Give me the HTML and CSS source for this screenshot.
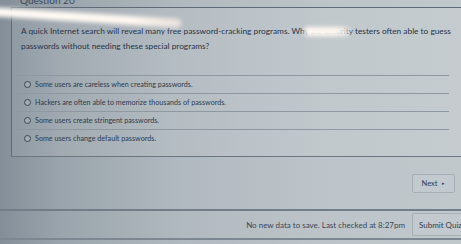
FILE: index.html
```html
<!DOCTYPE html>
<html>
<head>
<meta charset="utf-8">
<link rel="stylesheet" href="styles.css">
</head>
<body>
<div class="page">
  <div class="qhead"><span class="qtitle">Question 20</span></div>
  <div class="qbox">
    <p class="qtext">A quick Internet search will reveal many free password-cracking programs. Why are security testers often able to guess passwords without needing these special programs?</p>
    <ul class="answers">
      <li class="answer"><span class="radio"></span>Some users are careless when creating passwords.</li>
      <li class="answer"><span class="radio"></span>Hackers are often able to memorize thousands of passwords.</li>
      <li class="answer"><span class="radio"></span>Some users create stringent passwords.</li>
      <li class="answer"><span class="radio"></span>Some users change default passwords.</li>
    </ul>
  </div>
  <div class="nav">
    <button class="btn next">Next <span class="tri">&#9656;</span></button>
  </div>
  <div class="footer">
    <span class="status">No new data to save. Last checked at 8:27pm</span>
    <button class="btn submit">Submit Quiz</button>
  </div>
  <div class="glare g1"></div>
  <div class="glare g2"></div>
</div>
</body>
</html>
```
FILE: styles.css
```css
html, body {
  margin: 0;
  padding: 0;
}
body {
  width: 461px;
  height: 244px;
  overflow: hidden;
  font-family: Lato, "Open Sans", sans-serif;
  color: #2c3848;
}
.page {
  position: relative;
  width: 461px;
  height: 244px;
  overflow: hidden;
  background: linear-gradient(90deg, #838e98 0px, #9aa4ac 60px, #b0b9bf 180px, #bcc4c9 320px, #c1c8cc 461px);
  display: flex;
  flex-direction: column;
}
.qhead {
  height: 7px;
  overflow: hidden;
  padding-left: 20px;
}
.qtitle {
  display: block;
  margin-top: -5px;
  font-size: 10px;
  line-height: 11px;
  color: #3d4957;
}
.qbox {
  margin-left: 11px;
  height: 150px;
  border-left: 1px solid #5f6b76;
  border-top: 1px solid #5f6b76;
  border-bottom: 1px solid #6b7681;
  background: rgba(255,255,255,0.07);
  box-sizing: border-box;
}
.qtext {
  margin: 0;
  padding: 16px 0 0 9px;
  font-size: 8.3px;
  line-height: 15px;
  height: 51px;
  box-sizing: content-box;
  color: #27344a;
}
.answers {
  list-style: none;
  margin: 0;
  padding: 0;
  width: 437px;
}
.answer {
  border-top: 1px solid #8e98a1;
  height: 18px;
  box-sizing: border-box;
  display: flex;
  align-items: center;
  padding-left: 12px;
  font-size: 7.2px;
  color: #2f3b4c;
}
.radio {
  width: 5px;
  height: 5px;
  border: 1px solid #3c4756;
  border-radius: 50%;
  margin-right: 4px;
  background: rgba(255,255,255,0.15);
}
.nav {
  height: 54px;
  display: flex;
  justify-content: flex-end;
  align-items: flex-start;
  padding-right: 6px;
  padding-top: 17px;
  box-sizing: border-box;
  border-bottom: 2px solid #727d87;
}
.btn {
  font-family: Lato, "Open Sans", sans-serif;
  color: #2f3b4c;
  background: #c3cacf;
  border: 1px solid #a6afb6;
  border-radius: 2px;
  padding: 0;
  margin: 0;
}
.next {
  width: 43px;
  height: 19px;
  font-size: 7.5px;
}
.tri {
  font-size: 5px;
  margin-left: 3px;
  vertical-align: 1px;
}
.footer {
  height: 29px;
  border-bottom: 2px solid #7c8791;
  display: flex;
  align-items: center;
  justify-content: flex-end;
  gap: 7px;
  box-sizing: border-box;
}
.status {
  font-size: 8px;
  color: #3a4658;
}
.submit {
  width: 58px;
  height: 23px;
  font-size: 8px;
  text-align: left;
  padding-left: 6px;
  margin-right: -9px;
  border-right: none;
  white-space: nowrap;
  overflow: hidden;
}
.glare {
  position: absolute;
  pointer-events: none;
  filter: blur(2px);
}
.g1 {
  left: -10px;
  top: 7px;
  width: 192px;
  height: 9px;
  background: linear-gradient(90deg, rgba(255,252,248,1), rgba(255,247,240,1) 75%, rgba(255,240,230,0.7));
  transform: rotate(3.6deg);
  transform-origin: left top;
  border-radius: 6px;
}
.g2 {
  left: 304px;
  top: 27px;
  width: 46px;
  height: 9px;
  background: linear-gradient(90deg, rgba(255,248,242,1) 70%, rgba(255,248,242,0.6));
  border-radius: 6px;
}
```
